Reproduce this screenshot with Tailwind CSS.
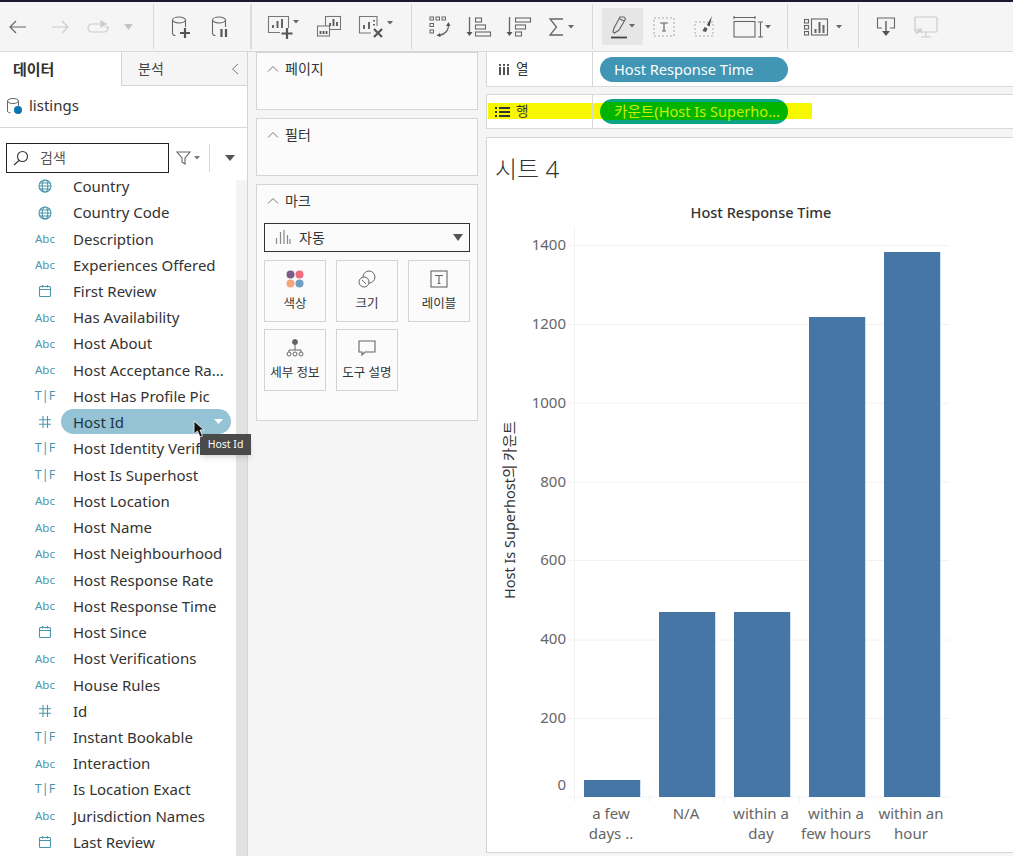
<!DOCTYPE html>
<html lang="ko">
<head>
  <meta charset="UTF-8">
  <title>시트 4</title>
  <script src="https://cdn.jsdelivr.net/npm/@tailwindcss/browser@4"></script>
</head>
<body class="w-[1013px] h-[856px] overflow-hidden bg-[#f5f5f5] text-[#333] font-['Noto_Sans','Noto_Sans_CJK_KR',sans-serif]">

  <!-- shared icons -->
  <svg class="hidden">
    <symbol id="globe" viewBox="0 0 14 14"><g fill="none" stroke="#4b96ad" stroke-width="1.1"><circle cx="7" cy="7" r="6"/><ellipse cx="7" cy="7" rx="2.8" ry="6"/><path d="M1 7h12M1.8 4h10.4M1.8 10h10.4"/></g></symbol>
    <symbol id="cal" viewBox="0 0 14 14"><g fill="none" stroke="#4b96ad" stroke-width="1.1"><rect x="1.5" y="2.5" width="11" height="10" rx="1"/><path d="M1.5 5.5h11M4.5 1v2.5M9.5 1v2.5"/></g></symbol>
    <symbol id="hash" viewBox="0 0 14 14"><path d="M5 1v12M9.500 1v12M1 4.800h12M1 9.200h12" fill="none" stroke="#4b96ad" stroke-width="1.100"/></symbol>
  </svg>

  <div class="h-[2px] bg-[#1b1b2f]"></div>

  <!-- toolbar -->
  <div class="flex h-[50px] items-center border-b border-[#d8d8d8] bg-[#f5f5f5]">
    <svg class="ml-[8px] w-[20px] h-[20px]" viewBox="0 0 20 20" fill="none" stroke="#666" stroke-width="1.2"><path d="M2 10h16M8 4l-6 6 6 6"/></svg>
    <svg class="ml-[22px] w-[20px] h-[20px]" viewBox="0 0 20 20" fill="none" stroke="#ccc" stroke-width="1.2"><path d="M2 10h16M12 4l6 6-6 6"/></svg>
    <svg class="ml-[16px] w-[24px] h-[20px]" viewBox="0 0 24 20" fill="none" stroke="#ccc" stroke-width="1.200"><path d="M19 10h3v1a4 4 0 0 1-4 4H6a4 4 0 0 1 0-8h9"/><path d="M15 4v6l5-3z" fill="#ccc"/></svg>
    <svg class="ml-[13px] w-[11px] h-[8px]" viewBox="0 0 11 8"><path d="M1 1h9L5.500 7z" fill="#c4c4c4"/></svg>
    <div class="ml-[19px] w-px h-[45px] bg-[#d8d8d8]"></div>
    <svg class="ml-[16px] w-[22px] h-[24px]" viewBox="0 0 22 24" fill="none" stroke="#666" stroke-width="1.100"><ellipse cx="9" cy="5" rx="6.500" ry="3"/><path d="M2.500 5v13a2.500 2.500 0 0 0 3 2.500M15.500 5v7"/><path d="M15 13v10M10 18h10" stroke="#555" stroke-width="2.200"/></svg>
    <svg class="ml-[18px] w-[22px] h-[24px]" viewBox="0 0 22 24" fill="none" stroke="#666" stroke-width="1.100"><ellipse cx="9" cy="5" rx="6.500" ry="3"/><path d="M2.500 5v13a2.500 2.500 0 0 0 3 2.500M15.500 5v7"/><path d="M11.500 14v8M16 14v8" stroke="#555" stroke-width="2.200"/></svg>
    <div class="ml-[18px] w-[2px] h-[45px] bg-[#dcdcdc]"></div>
    <svg class="ml-[14px] w-[34px] h-[26px]" viewBox="0 0 34 26" fill="none" stroke="#777" stroke-width="1.100"><path d="M14 18.500H2.500V2.500H22.500V14"/><path d="M7 14v-3M11.500 14V7M16 14V5" stroke="#666" stroke-width="2"/><path d="M21 14v11M15.500 19.500h11" stroke="#555" stroke-width="2.200"/><path d="M27 6h6l-3 3.500z" fill="#666" stroke="none"/></svg>
    <svg class="ml-[16px] w-[26px] h-[24px]" viewBox="0 0 26 24" fill="none" stroke="#777" stroke-width="1.100"><rect x="9.500" y="1.500" width="15" height="13" fill="#f5f5f5"/><rect x="1.500" y="11" width="12" height="10" fill="#f5f5f5"/><path d="M14 11V8M17.500 11V4M21 11V7" stroke="#555" stroke-width="1.800"/><path d="M4.500 19v-3M7.500 19v-3M10.500 19v-3" stroke="#555" stroke-width="1.800"/></svg>
    <svg class="ml-[15px] w-[37px] h-[26px]" viewBox="0 0 37 26" fill="none" stroke="#777" stroke-width="1.100"><path d="M14 19H2.500V2.500H20V12"/><path d="M7 15v-4M12 15V8" stroke="#666" stroke-width="2"/><path d="M17 6v1.500M17 10v1.500" stroke="#666" stroke-width="2"/><path d="M17 15l8 8M25 15l-8 8" stroke="#555" stroke-width="2.200"/><path d="M30 7h6l-3 3.500z" fill="#666" stroke="none"/></svg>
    <div class="ml-[17px] w-px h-[45px] bg-[#d8d8d8]"></div>
    <svg class="ml-[16px] w-[24px] h-[24px]" viewBox="0 0 24 24" fill="none" stroke="#666" stroke-width="1"><rect x="2" y="2" width="3.500" height="3"/><rect x="8" y="2" width="3.500" height="3"/><rect x="14" y="2" width="3.500" height="3"/><rect x="2" y="8.500" width="3.500" height="3"/><rect x="2" y="15" width="3.500" height="3"/><path d="M20.500 9c.5 6-2.500 10-9.500 11.500" stroke-width="1.300"/><path d="M18 11l2.500-4 2 4zM12 18l-3.500 2.500 4 1.500z" fill="#555" stroke="none"/></svg>
    <svg class="ml-[14px] w-[26px] h-[24px]" viewBox="0 0 26 24" fill="none" stroke="#666" stroke-width="1.100"><path d="M3.500 2v18" stroke-width="1.300"/><path d="M.5 17l3 4 3-4z" fill="#555" stroke="none"/><rect x="9.500" y="3" width="6" height="4"/><rect x="9.500" y="10" width="10" height="4"/><rect x="9.500" y="17" width="15" height="4"/></svg>
    <svg class="ml-[14px] w-[26px] h-[24px]" viewBox="0 0 26 24" fill="none" stroke="#666" stroke-width="1.100"><path d="M3.500 2v18" stroke-width="1.300"/><path d="M.5 17l3 4 3-4z" fill="#555" stroke="none"/><rect x="9.500" y="3" width="15" height="4"/><rect x="9.500" y="10" width="10" height="4"/><rect x="9.500" y="17" width="6" height="4"/></svg>
    <svg class="ml-[16px] w-[28px] h-[22px]" viewBox="0 0 28 22" fill="none" stroke="#666" stroke-width="1.300"><path d="M15 3H2l6.500 8L2 19h13"/><path d="M20 9h6l-3 3.500z" fill="#666" stroke="none"/></svg>
    <div class="ml-[16px] w-px h-[45px] bg-[#d8d8d8]"></div>
    <div class="ml-[9px] flex w-[41px] h-[37px] items-center justify-center bg-[#e6e6e6]">
      <svg class="w-[26px] h-[26px]" viewBox="0 0 26 26" fill="none" stroke="#666" stroke-width="1.100"><path d="M3 18l1-4L10 3l4 0 1.500 2L9 16l-4.500 3z"/><path d="M9 4.500l5 2.500"/><path d="M1 23.500h16" stroke="#444" stroke-width="1.800"/><path d="M19 10h6l-3 3.500z" fill="#666" stroke="none"/></svg>
    </div>
    <svg class="ml-[9px] w-[24px] h-[22px]" viewBox="0 0 24 22" fill="none"><rect x="2" y="2" width="20" height="18" stroke="#aaa" stroke-dasharray="2 2"/><path d="M8 7h8M12 7v8M10 15h4" stroke="#666" stroke-width="1.200"/></svg>
    <svg class="ml-[17px] w-[24px] h-[22px]" viewBox="0 0 24 22" fill="none"><rect x="2" y="6" width="18" height="14" stroke="#aaa" stroke-dasharray="2 2"/><path d="M19 0l-5 9 2.500 1.500z" fill="#444"/><path d="M11.500 11l3 1.500-1.500 3.500-3.500-1z" fill="#555"/></svg>
    <svg class="ml-[15px] w-[40px] h-[24px]" viewBox="0 0 40 24" fill="none" stroke="#666" stroke-width="1.100"><path d="M2 2.500h21M2 1v3M23 1v3"/><rect x="2" y="6.500" width="21" height="15.500"/><path d="M26 7h5M26 22h5M28.500 7v15"/><path d="M33 10h6l-3 3.500z" fill="#666" stroke="none"/></svg>
    <div class="ml-[15px] w-px h-[45px] bg-[#d8d8d8]"></div>
    <svg class="ml-[15px] w-[40px] h-[20px]" viewBox="0 0 40 20" fill="none" stroke="#666" stroke-width="1.100"><rect x="1.500" y="2.500" width="4" height="3.500"/><rect x="1.500" y="8.500" width="4" height="3.500"/><rect x="1.500" y="14.500" width="4" height="3.500"/><rect x="8.500" y="2" width="16" height="16"/><path d="M12.500 16v-4M16.500 16V5M20.500 16V8" stroke-width="2"/><path d="M33 8h6l-3 3.500z" fill="#666" stroke="none"/></svg>
    <div class="ml-[15px] w-px h-[45px] bg-[#d8d8d8]"></div>
    <svg class="ml-[16px] w-[22px] h-[22px]" viewBox="0 0 22 22" fill="none" stroke="#666" stroke-width="1.100"><path d="M7 12H2.500V2h17v10H15"/><path d="M11 5v12" stroke-width="1.500"/><path d="M7 15h8l-4 5z" fill="#555" stroke="none"/></svg>
    <svg class="ml-[16px] w-[26px] h-[24px]" viewBox="0 0 26 24" fill="none" stroke="#ccc" stroke-width="1.200"><rect x="2" y="2" width="22" height="15" rx="1"/><path d="M13 17v5M8 22h10M2 14l6 3M3 19l5-5M5 14h3v3"/></svg>
  </div>

  <div class="flex h-[804px]">

    <!-- data pane -->
    <div class="relative w-[248px] h-full shrink-0 border-r border-[#d4d4d4] bg-white">
      <div class="flex h-[34px]">
        <div class="flex w-[121px] items-center pl-[13px] text-[15px] font-semibold text-[#333]">데이터</div>
        <div class="flex flex-1 items-center justify-between border-b border-l border-[#d4d4d4] bg-[#f5f5f5] pl-[16px] pr-[8px] text-[14px] text-[#444]">
          분석
          <svg class="w-[8px] h-[12px]" viewBox="0 0 8 12" fill="none" stroke="#777" stroke-width="1"><path d="M7 1L1.500 6 7 11"/></svg>
        </div>
      </div>
      <div class="flex h-[42px] items-center gap-[6px] border-b border-[#d8d8d8] pb-[2px] pl-[6px]">
        <svg class="w-[17px] h-[18px]" viewBox="0 0 17 18" fill="none" stroke="#666" stroke-width="1"><ellipse cx="7" cy="4" rx="5.500" ry="2.500"/><path d="M1.500 4v10a2 2 0 0 0 3 1.500M12.500 4v5"/><circle cx="12" cy="13" r="4" fill="#0b75b0" stroke="none"/></svg>
        <span class="text-[15px] text-[#333]">listings</span>
      </div>
      <div class="flex h-[45.200px] items-center pl-[6px] pt-[14px]">
        <div class="flex w-[163px] h-[30px] items-center gap-[11px] border border-[#222] pl-[6px] text-[14px] text-[#555]">
          <svg class="w-[16px] h-[16px]" viewBox="0 0 16 16" fill="none" stroke="#333" stroke-width="1.100"><circle cx="9.500" cy="6.500" r="5"/><path d="M6 10.500L1 15"/></svg>
          검색
        </div>
        <svg class="ml-[7px] w-[24px] h-[14px]" viewBox="0 0 24 14" fill="none" stroke="#666" stroke-width="1.100"><path d="M1 1h13L9 7v6l-3-2V7z"/><path d="M18 5h6l-3 3.500z" fill="#777" stroke="none"/></svg>
        <div class="ml-[9px] w-px h-[28px] bg-[#d8d8d8]"></div>
        <svg class="ml-[15px] w-[10px] h-[6px]" viewBox="0 0 10 6"><path d="M0 0h10L5 6z" fill="#555"/></svg>
      </div>

      <div class="absolute right-0 top-[128px] bottom-0 w-[11px] bg-[#f3f3f3]">
        <div class="absolute inset-x-0 top-[100px] bottom-0 bg-[#e2e2e2]"></div>
      </div>

      <!-- field list -->
      <ul class="text-[15px] text-[#333] [&>li]:flex [&>li]:h-[26.240px] [&>li]:items-center">
        <li><span class="flex w-[73px] justify-center pl-[17px]"><svg class="w-[14px] h-[14px]"><use href="#globe"/></svg></span>Country</li>
        <li><span class="flex w-[73px] justify-center pl-[17px]"><svg class="w-[14px] h-[14px]"><use href="#globe"/></svg></span>Country Code</li>
        <li><span class="w-[73px] pl-[17px] text-center text-[11.500px] text-[#4b96ad]">Abc</span>Description</li>
        <li><span class="w-[73px] pl-[17px] text-center text-[11.500px] text-[#4b96ad]">Abc</span>Experiences Offered</li>
        <li><span class="flex w-[73px] justify-center pl-[17px]"><svg class="w-[14px] h-[14px]"><use href="#cal"/></svg></span>First Review</li>
        <li><span class="w-[73px] pl-[17px] text-center text-[11.500px] text-[#4b96ad]">Abc</span>Has Availability</li>
        <li><span class="w-[73px] pl-[17px] text-center text-[11.500px] text-[#4b96ad]">Abc</span>Host About</li>
        <li><span class="w-[73px] pl-[17px] text-center text-[11.500px] text-[#4b96ad]">Abc</span>Host Acceptance Ra...</li>
        <li><span class="w-[73px] pl-[17px] text-center text-[12.500px] text-[#4b96ad]">T|F</span>Host Has Profile Pic</li>
        <li class="relative"><span class="flex w-[73px] justify-center pl-[17px]"><svg class="w-[14px] h-[14px]"><use href="#hash"/></svg></span><span class="absolute left-[61px] top-0 flex w-[170px] h-[25px] items-center justify-between rounded-full bg-[#93c3d4] pl-[12px] pr-[8px] text-[#1f3440]">Host Id<svg class="w-[9px] h-[5px]" viewBox="0 0 9 5"><path d="M0 0h9L4.500 5z" fill="#fff"/></svg></span></li>
        <li><span class="w-[73px] pl-[17px] text-center text-[12.500px] text-[#4b96ad]">T|F</span><span class="w-[127px] overflow-hidden whitespace-nowrap">Host Identity Verification</span></li>
        <li><span class="w-[73px] pl-[17px] text-center text-[12.500px] text-[#4b96ad]">T|F</span>Host Is Superhost</li>
        <li><span class="w-[73px] pl-[17px] text-center text-[11.500px] text-[#4b96ad]">Abc</span>Host Location</li>
        <li><span class="w-[73px] pl-[17px] text-center text-[11.500px] text-[#4b96ad]">Abc</span>Host Name</li>
        <li><span class="w-[73px] pl-[17px] text-center text-[11.500px] text-[#4b96ad]">Abc</span>Host Neighbourhood</li>
        <li><span class="w-[73px] pl-[17px] text-center text-[11.500px] text-[#4b96ad]">Abc</span>Host Response Rate</li>
        <li><span class="w-[73px] pl-[17px] text-center text-[11.500px] text-[#4b96ad]">Abc</span>Host Response Time</li>
        <li><span class="flex w-[73px] justify-center pl-[17px]"><svg class="w-[14px] h-[14px]"><use href="#cal"/></svg></span>Host Since</li>
        <li><span class="w-[73px] pl-[17px] text-center text-[11.500px] text-[#4b96ad]">Abc</span>Host Verifications</li>
        <li><span class="w-[73px] pl-[17px] text-center text-[11.500px] text-[#4b96ad]">Abc</span>House Rules</li>
        <li><span class="flex w-[73px] justify-center pl-[17px]"><svg class="w-[14px] h-[14px]"><use href="#hash"/></svg></span>Id</li>
        <li><span class="w-[73px] pl-[17px] text-center text-[12.500px] text-[#4b96ad]">T|F</span>Instant Bookable</li>
        <li><span class="w-[73px] pl-[17px] text-center text-[11.500px] text-[#4b96ad]">Abc</span>Interaction</li>
        <li><span class="w-[73px] pl-[17px] text-center text-[12.500px] text-[#4b96ad]">T|F</span>Is Location Exact</li>
        <li><span class="w-[73px] pl-[17px] text-center text-[11.500px] text-[#4b96ad]">Abc</span>Jurisdiction Names</li>
        <li><span class="flex w-[73px] justify-center pl-[17px]"><svg class="w-[14px] h-[14px]"><use href="#cal"/></svg></span>Last Review</li>
      </ul>

      <!-- cursor and tooltip over Host Id -->
      <div class="absolute left-[200px] top-[382px] z-10 flex w-[51px] h-[21px] items-center justify-center bg-[#4a4a4a] text-[10.500px] text-white shadow-md">Host Id</div>
      <svg class="absolute left-[193px] top-[368px] z-20 w-[12px] h-[18px]" viewBox="0 0 12 18"><path d="M1 1v13l3.500-3 2.500 6 2.500-1-2.500-6H11z" fill="#111" stroke="#fff" stroke-width=".8"/></svg>
    </div>

    <!-- shelves column -->
    <div class="flex w-[238px] h-full shrink-0 flex-col gap-[8px] px-[8px] text-[14px] text-[#333]">
      <div class="h-[58px] border border-[#d4d4d4] bg-[#fbfbfb]">
        <div class="flex h-[31px] items-center gap-[6px] pl-[10px]">
          <svg class="w-[12px] h-[7px]" viewBox="0 0 12 7" fill="none" stroke="#777"><path d="M1 6.500l5-5 5 5"/></svg>페이지
        </div>
      </div>
      <div class="h-[58px] border border-[#d4d4d4] bg-[#fbfbfb]">
        <div class="flex h-[31px] items-center gap-[6px] pl-[10px]">
          <svg class="w-[12px] h-[7px]" viewBox="0 0 12 7" fill="none" stroke="#777"><path d="M1 6.500l5-5 5 5"/></svg>필터
        </div>
      </div>
      <div class="h-[237px] border border-[#d4d4d4] bg-[#fbfbfb] px-[7px]">
        <div class="flex h-[31px] items-center gap-[6px] pl-[3px]">
          <svg class="w-[12px] h-[7px]" viewBox="0 0 12 7" fill="none" stroke="#777"><path d="M1 6.500l5-5 5 5"/></svg>마크
        </div>
        <div class="mt-[7px] flex h-[29px] w-[206px] items-center gap-[8px] border border-[#333] pb-[1px] pl-[10px] pr-[6px]">
          <svg class="w-[16px] h-[16px]" viewBox="0 0 16 16" fill="none" stroke="#888" stroke-width="1.200"><path d="M1.500 15V9M5.500 15V3M9 15V1M12.500 15V6M15 15v-5"/></svg>
          자동
          <svg class="ml-auto w-[10px] h-[7px]" viewBox="0 0 10 7"><path d="M0 0h10L5 7z" fill="#555"/></svg>
        </div>
        <div class="mt-[8px] grid grid-cols-[62px_62px_62px] gap-x-[10px] gap-y-[7px] text-[12.500px]">
          <div class="flex h-[62px] flex-col items-center justify-center gap-[7px] border border-[#d4d4d4] pt-[2px]">
            <svg class="w-[18px] h-[18px]" viewBox="0 0 18 18"><circle cx="4.500" cy="4.500" r="4" fill="#7a5c86"/><circle cx="13.500" cy="4.500" r="4" fill="#ef6a7a"/><circle cx="4.500" cy="13.500" r="4" fill="#f4a77c"/><circle cx="13.500" cy="13.500" r="4" fill="#6f9fc4"/></svg>색상
          </div>
          <div class="flex h-[62px] flex-col items-center justify-center gap-[7px] border border-[#d4d4d4] pt-[2px]">
            <svg class="w-[18px] h-[18px]" viewBox="0 0 18 18" fill="none" stroke="#666"><circle cx="11" cy="7" r="6"/><circle cx="6" cy="12" r="5" fill="#fbfbfb"/><path d="M4 10l4 4"/></svg>크기
          </div>
          <div class="flex h-[62px] flex-col items-center justify-center gap-[7px] border border-[#d4d4d4] pt-[2px]">
            <svg class="w-[18px] h-[18px]" viewBox="0 0 18 18" fill="none" stroke="#666" stroke-width="1.100"><rect x="1" y="1" width="16" height="16"/><path d="M5 5.500h8M9 5.500v8M7.500 13.500h3"/></svg>레이블
          </div>
          <div class="flex h-[62px] flex-col items-center justify-center gap-[7px] border border-[#d4d4d4] pt-[2px]">
            <svg class="w-[18px] h-[18px]" viewBox="0 0 18 18" fill="none" stroke="#666"><circle cx="9" cy="3" r="2.500" fill="#666"/><path d="M9 5.500V11M3 13v-2h12v2"/><circle cx="3" cy="15" r="2"/><circle cx="9" cy="15" r="2"/><circle cx="15" cy="15" r="2"/></svg>세부 정보
          </div>
          <div class="flex h-[62px] flex-col items-center justify-center gap-[7px] border border-[#d4d4d4] pt-[2px]">
            <svg class="w-[18px] h-[18px]" viewBox="0 0 18 18" fill="none" stroke="#666" stroke-width="1.100"><path d="M1 2h16v11H7l-3 3v-3H1z"/></svg>도구 설명
          </div>
        </div>
      </div>
    </div>

    <!-- shelves and view -->
    <div class="flex h-full flex-1 flex-col">
      <div class="flex h-[35px] items-center border-b border-l border-[#d8d8d8] bg-white text-[13.500px]">
        <div class="flex w-[106px] h-full items-center gap-[6px] border-r border-[#d8d8d8] pl-[11px]">
          <svg class="w-[12px] h-[12px]" viewBox="0 0 12 12"><path d="M1 4h2v8H1zM5 4h2v8H5zM9 4h2v8H9zM1 1h2v2H1zM5 1h2v2H5zM9 1h2v2H9z" fill="#555"/></svg>열
        </div>
        <div class="ml-[7px] flex w-[188px] h-[25px] items-center rounded-full bg-[#4096b4] pl-[14px] pt-[1px] text-[14.600px] text-white">Host Response Time</div>
      </div>
      <div class="relative mt-[7px] flex h-[35px] items-center border-y border-l border-[#d8d8d8] bg-white text-[13.500px]">
        <div class="absolute left-[1px] top-[8px] h-[16px] w-[324px] bg-[#f7f700]"></div>
        <div class="relative flex w-[106px] h-full items-center gap-[6px] border-r border-[#d8d8d8] pl-[8px]">
          <svg class="w-[15px] h-[10px]" viewBox="0 0 15 10"><path d="M0 0h2v2H0zM4 0h11v2H4zM0 4h2v2H0zM4 4h11v2H4zM0 8h2v2H0zM4 8h11v2H4z" fill="#333"/></svg>행
        </div>
        <div class="relative ml-[7px] flex w-[188px] h-[25px] items-center rounded-full bg-[#0da585] pl-[14px] text-[14.600px] text-[#c8f000] [background-image:linear-gradient(#0da585_3px,#00b400_3px,#00b400_21px,#0da585_21px)]">카운트(Host Is Superho...</div>
      </div>
      <div class="mt-[8px] h-[716px] overflow-hidden border-y border-l border-[#d4d4d4] bg-white">
        <div class="pl-[8px] pt-[13px] text-[24px] leading-[36px] font-light text-[#333]">시트 4</div>
        <svg class="block" width="526" height="664" viewBox="487 187 526 664">
          <text x="761" y="218" text-anchor="middle" class="text-[14.500px] font-medium" fill="#333">Host Response Time</text>
          <g stroke="#f2f2f2">
            <path d="M574.500 226V802"/>
            <path d="M568 245.500H949M568 324.500H949M568 403H949M568 482H949M568 560.500H949M568 640H949M568 718.500H949M568 797H949"/>
            <path d="M649.500 797v5M724.500 797v5M799.500 797v5M874.500 797v5"/>
          </g>
          <g fill="#4676a5">
            <rect x="584" y="780" width="56" height="17"/>
            <rect x="659" y="612" width="56" height="185"/>
            <rect x="734" y="612" width="56" height="185"/>
            <rect x="809" y="317" width="56" height="480"/>
            <rect x="884" y="252" width="56" height="545"/>
          </g>
          <path d="M640.500 780V797M715.500 612V797M790.500 612V797M865.500 317V797M940.500 252V797" stroke="#cfe2f3"/>
          <g fill="#666" text-anchor="end" class="text-[15px]">
            <text x="566" y="250">1400</text>
            <text x="566" y="329">1200</text>
            <text x="566" y="408">1000</text>
            <text x="566" y="487">800</text>
            <text x="566" y="565">600</text>
            <text x="566" y="644">400</text>
            <text x="566" y="723">200</text>
            <text x="566" y="790">0</text>
          </g>
          <text transform="translate(515 510) rotate(-90)" text-anchor="middle" class="text-[14.500px]" fill="#333">Host Is Superhost의 카운트</text>
          <g fill="#666" text-anchor="middle" class="text-[15px]">
            <text x="611" y="819">a few</text><text x="611" y="839">days ..</text>
            <text x="686" y="819">N/A</text>
            <text x="761" y="819">within a</text><text x="761" y="839">day</text>
            <text x="836" y="819">within a</text><text x="836" y="839">few hours</text>
            <text x="911" y="819">within an</text><text x="911" y="839">hour</text>
          </g>
        </svg>
      </div>
    </div>
  </div>
</body>
</html>
